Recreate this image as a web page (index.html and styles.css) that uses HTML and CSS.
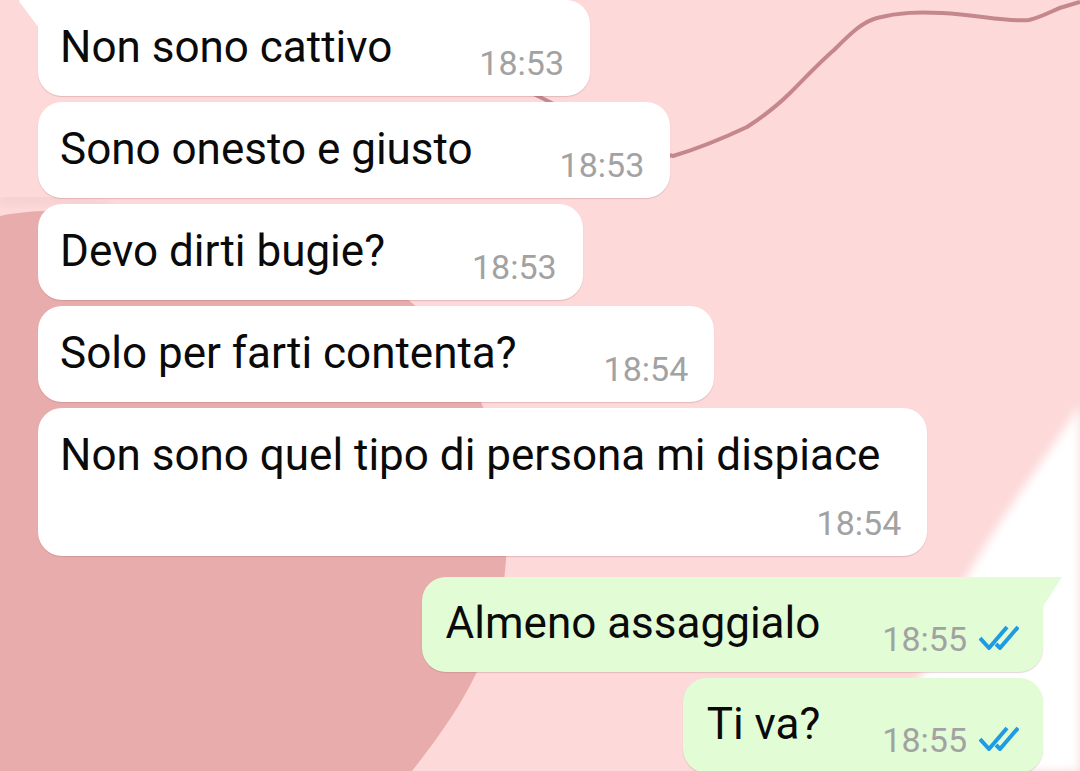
FILE: index.html
```html
<!DOCTYPE html>
<html>
<head>
<title>Chat</title>
<meta http-equiv="Content-Type" content="text/html; charset=utf-8" />
<link rel="stylesheet" href="styles.css">
</head>
<body>
<svg class="wallpaper" width="1080" height="771" viewBox="0 0 1080 771">
	<defs>
		<filter id="soft"><feGaussianBlur stdDeviation="5" /></filter>
	</defs>
	<rect x="0" y="0" width="1080" height="771" fill="#fdd9d9" />
	<path d="M0 216 C 40 208, 120 206, 220 224 C 320 244, 390 272, 430 322 C 490 392, 512 470, 506 560 C 500 650, 460 710, 412 771 L 0 771 Z" fill="#e8acac" />
	<path d="M0 200 C 30 196, 70 200, 110 208" stroke="#f6cfcf" stroke-width="10" fill="none" filter="url(#soft)" />
	<path d="M1080 405 C 1040 468, 985 535, 950 610 C 925 660, 905 715, 888 771 L 1080 771 Z" fill="#ffffff" filter="url(#soft)" />
	<path d="M520 88 C 560 104, 620 144, 673 156 C 700 148, 730 135, 747 127 C 770 112, 785 98, 790 93 C 805 78, 820 62, 834 50 C 850 34, 862 22, 877 18 C 900 12, 920 12, 942 13 C 980 15, 1005 22, 1029 20 C 1045 16, 1055 9, 1063 7 L 1080 2" stroke="#c4878b" stroke-width="4" fill="none" />
</svg>
<div class="chat">
	<div class="msg in first"><span class="text">Non sono cattivo</span><span class="meta">18:53</span></div>
	<div class="msg in"><span class="text">Sono onesto e giusto</span><span class="meta">18:53</span></div>
	<div class="msg in"><span class="text">Devo dirti bugie?</span><span class="meta">18:53</span></div>
	<div class="msg in"><span class="text">Solo per farti contenta?</span><span class="meta">18:54</span></div>
	<div class="msg in wide"><span class="text">Non sono quel tipo di persona mi dispiace</span><span class="meta">18:54</span></div>
	<div class="msg out first"><span class="text">Almeno assaggialo</span><span class="meta">18:55<svg class="ticks" width="40" height="25" viewBox="0 0 40 25"><path d="M1 13 L10 23 L28 2" /><path d="M17 19 L21 23 L39 2" /></svg></span></div>
	<div class="msg out"><span class="text">Ti va?</span><span class="meta">18:55<svg class="ticks" width="40" height="25" viewBox="0 0 40 25"><path d="M1 13 L10 23 L28 2" /><path d="M17 19 L21 23 L39 2" /></svg></span></div>
</div>
</body>
</html>
```

FILE: styles.css
```css
body {
	margin: 0;
	width: 1080px;
	height: 771px;
	overflow: hidden;
	position: relative;
	font-family: Roboto, "Liberation Sans", sans-serif;
	background-color: #fdd9d9;
}
.wallpaper {
	position: absolute;
	top: 0;
	left: 0;
	display: block;
}
.chat {
	position: relative;
	display: flex;
	flex-direction: column;
	gap: 6px;
	padding: 0 37px 0 38px;
}
.msg {
	position: relative;
	display: flex;
	align-items: flex-start;
	padding: 21px 26px 13px 22px;
	border-radius: 24px;
	background-color: #ffffff;
	box-shadow: 0 1px 1px rgba(150, 90, 90, 0.25);
}
.msg.in {
	align-self: flex-start;
}
.msg.out {
	align-self: flex-end;
	background-color: #e2fcd6;
	padding: 20px 24px 13px 24px;
}
.msg.out.first {
	margin-top: 15px;
}
.msg.in.first {
	border-top-left-radius: 0;
}
.msg.out.first {
	border-top-right-radius: 0;
}
/* the little tails of the first bubbles */
.msg.in.first:before {
	content: '';
	position: absolute;
	top: 0;
	left: -20px;
	width: 21px;
	height: 28px;
	background-color: #ffffff;
	clip-path: polygon(0 0, 100% 0, 100% 100%);
	border-top-left-radius: 3px;
}
.msg.out.first:before {
	content: '';
	position: absolute;
	top: 0;
	right: -19px;
	width: 20px;
	height: 31px;
	background-color: #e2fcd6;
	clip-path: polygon(0 0, 100% 0, 0 100%);
}
.text {
	font-size: 44px;
	line-height: 52px;
	color: #0a0a0a;
	white-space: nowrap;
}
.meta {
	font-size: 34px;
	line-height: 40px;
	color: #a2a2a2;
	margin-top: 22px;
	margin-left: 87px;
	white-space: nowrap;
}
.msg.out .meta {
	margin-left: 62px;
}
.msg.wide {
	flex-direction: column;
	padding-right: 47px;
}
.msg.wide .meta {
	align-self: flex-end;
	margin-right: -21px;
}
.ticks {
	margin-left: 12px;
	vertical-align: 1px;
	fill: none;
	stroke: #1e9be3;
	stroke-width: 4;
	stroke-linejoin: round;
}
```
